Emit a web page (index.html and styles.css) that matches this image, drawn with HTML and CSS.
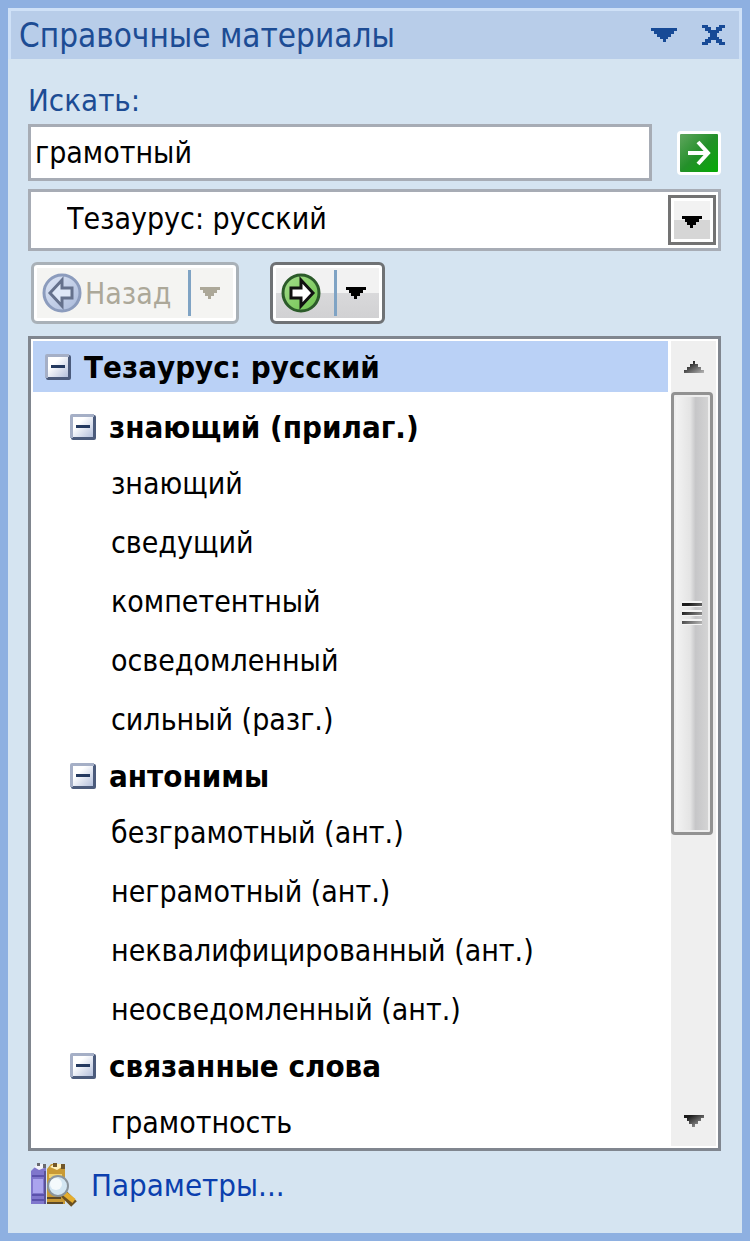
FILE: index.html
```html
<!DOCTYPE html>
<html lang="ru">
<head>
	<meta charset="utf-8">
	<title>Справочные материалы</title>
	<link rel="stylesheet" href="styles.css">
</head>
<body>
	<!-- Shared drawings for the small glyphs. -->
	<svg class="defs" width="0" height="0" aria-hidden="true">
		<defs>
			<linearGradient id="boxFill" x1="0" y1="0" x2="1" y2="1">
				<stop offset="0.3" stop-color="#ffffff"/>
				<stop offset="1" stop-color="#b4c0dc"/>
			</linearGradient>
			<linearGradient id="backFill" x1="0" y1="0" x2="1" y2="1">
				<stop offset="0" stop-color="#dfe7f6"/>
				<stop offset="1" stop-color="#a9b9da"/>
			</linearGradient>
			<linearGradient id="forwardFill" x1="0" y1="0" x2="1" y2="1">
				<stop offset="0" stop-color="#a5dc8c"/>
				<stop offset="1" stop-color="#6cc24c"/>
			</linearGradient>
			<linearGradient id="arrowFade" x1="0" y1="0" x2="1" y2="1">
				<stop offset="0.2" stop-color="#1c1c1c"/>
				<stop offset="1" stop-color="#b8b8b8"/>
			</linearGradient>
			<symbol id="down" viewBox="0 0 20 12">
				<path d="M0 0H20V3H17V6H14V9H11V12H8V9H5V6H3V3H0Z"/>
			</symbol>
			<symbol id="minus" viewBox="0 0 26 26">
				<rect x="1" y="1" width="25" height="25" rx="2" fill="#4b5b7c"/>
				<path d="M0 2Q0 0 2 0H24V3H3V24H0Z" fill="#a5afc6"/>
				<rect x="3" y="3" width="20" height="20" fill="url(#boxFill)"/>
				<rect x="6" y="11" width="14" height="3" fill="#24395f"/>
			</symbol>
		</defs>
	</svg>

	<div class="pane">
		<header class="titlebar">
			<h1>Справочные материалы</h1>
			<button class="plain" aria-label="Меню">
				<svg width="26" height="14" viewBox="0 0 26 14"><path d="M0 0H26V3H23V6H20V9H17V11H15V14H12V11H9V9H6V6H3V3H0Z" fill="#174a96"/></svg>
			</button>
			<button class="plain" aria-label="Закрыть">
				<svg width="23" height="20" viewBox="0 0 23 20"><path d="M0 0H6V2H9V5H14V2H17V0H23V3H20V6H17V8H15V12H17V14H20V17H23V20H17V18H14V15H9V18H6V20H0V17H3V14H6V12H8V8H6V6H3V3H0Z" fill="#174a96"/></svg>
			</button>
		</header>

		<main class="content">
			<label class="caption" for="query">Искать:</label>
			<div class="search">
				<input id="query" type="text" value="грамотный">
				<button class="go" aria-label="Начать поиск">
					<svg width="26" height="26" viewBox="0 0 26 26"><path d="M2 13H22M12 2L22 13L12 24" fill="none" stroke="#fff" stroke-width="4"/></svg>
				</button>
			</div>
			<div class="source">
				<select aria-label="Источник">
					<option>Тезаурус: русский</option>
				</select>
				<span class="source-arrow"><svg width="20" height="12"><use href="#down"/></svg></span>
			</div>

			<div class="nav">
				<div class="split back">
					<button disabled>
						<svg width="40" height="40" viewBox="0 0 40 40">
							<circle cx="20" cy="20" r="18" fill="url(#backFill)" stroke="#8c9cbd" stroke-width="3"/>
							<path d="M8 20L20 7V15H30V25H20V33Z" fill="#dfe8f7" stroke="#65718c" stroke-width="3"/>
						</svg>
						<span>Назад</span>
					</button>
					<button class="more" disabled aria-label="Список предыдущих"><svg width="20" height="12"><use href="#down"/></svg></button>
				</div>
				<div class="split forward">
					<button aria-label="Вперед">
						<svg width="40" height="40" viewBox="0 0 40 40">
							<circle cx="20" cy="20" r="18" fill="url(#forwardFill)" stroke="#2c5b2a" stroke-width="3"/>
							<path d="M32 20L20 7V15H10V25H20V33Z" fill="#fff" stroke="#111" stroke-width="3"/>
						</svg>
					</button>
					<button class="more" aria-label="Список следующих"><svg width="20" height="12"><use href="#down"/></svg></button>
				</div>
			</div>

			<div class="results">
				<div class="tree">
					<h2><button class="plain" aria-label="Свернуть"><svg width="26" height="26"><use href="#minus"/></svg></button>Тезаурус: русский</h2>

					<h3><button class="plain" aria-label="Свернуть"><svg width="26" height="26"><use href="#minus"/></svg></button>знающий (прилаг.)</h3>
					<ul>
						<li>знающий</li>
						<li>сведущий</li>
						<li>компетентный</li>
						<li>осведомленный</li>
						<li>сильный (разг.)</li>
					</ul>

					<h3><button class="plain" aria-label="Свернуть"><svg width="26" height="26"><use href="#minus"/></svg></button>антонимы</h3>
					<ul>
						<li>безграмотный (ант.)</li>
						<li>неграмотный (ант.)</li>
						<li>неквалифицированный (ант.)</li>
						<li>неосведомленный (ант.)</li>
					</ul>

					<h3><button class="plain" aria-label="Свернуть"><svg width="26" height="26"><use href="#minus"/></svg></button>связанные слова</h3>
					<ul>
						<li>грамотность</li>
					</ul>
				</div>
				<div class="scrollbar">
					<button class="plain step" aria-label="Вверх">
						<svg width="20" height="12" viewBox="0 0 20 12"><path d="M0 12V9H3V6H6V3H9V0H11V3H14V6H17V9H20V12Z" fill="url(#arrowFade)"/></svg>
					</button>
					<div class="track">
						<div class="thumb">
							<svg width="20" height="24" viewBox="0 0 20 24"><path d="M0 3H20M0 12H20M0 21H20" stroke="#f4f4f4" stroke-width="6"/><path d="M0 2H20V5H0ZM0 11H20V14H0ZM0 20H20V23H0Z" fill="url(#arrowFade)"/></svg>
						</div>
					</div>
					<button class="plain step" aria-label="Вниз">
						<svg width="20" height="12" fill="url(#arrowFade)"><use href="#down"/></svg>
					</button>
				</div>
			</div>

			<footer class="options">
				<svg width="46" height="44" viewBox="0 0 46 44">
					<path d="M0 8L5 3H15V41H0Z" fill="#7f76cc"/>
					<path d="M3 4L7 1H14L13 5L8 7Z" fill="#f3f3fa"/>
					<path d="M6 0H9V3H6ZM12 1H15V5H12Z" fill="#69696f"/>
					<path d="M2 16H12V30H2Z" fill="#aaa4ee"/>
					<path d="M1 13H13M1 32H13M1 37H13" stroke="#5b52ac" stroke-width="2"/>
					<path d="M14 8V41" stroke="#5b5299" stroke-width="2"/>
					<path d="M16 6L20 1H34V41H16Z" fill="#c99a35"/>
					<path d="M19 4L23 1H31V4L26 7Z" fill="#fff1bb"/>
					<path d="M22 0H26V4H22ZM30 1H34V6H30Z" fill="#71572b"/>
					<path d="M18 11H31V15H18Z" fill="#f1d36f"/>
					<path d="M16 35H30M16 40H32" stroke="#5e4a28" stroke-width="2"/>
					<path d="M33 31L43 41" stroke="#6b5020" stroke-width="8"/>
					<path d="M33 30L43 38" stroke="#e4ad2e" stroke-width="5"/>
					<circle cx="27" cy="23" r="10" fill="#d3e6f2" stroke="#8a949c" stroke-width="2"/>
					<circle cx="25" cy="21" r="6" fill="#f4fafc"/>
				</svg>
				<a href="#">Параметры...</a>
			</footer>
		</main>
	</div>
</body>
</html>
```
FILE: styles.css
```css
* {
	box-sizing: border-box;
}
body {
	margin: 0;
	font-family: "DejaVu Sans Condensed", "DejaVu Sans", sans-serif;
	font-size: 30px;
	color: #000;
	background-color: #8eb0e1;
}
button, input, select {
	font: inherit;
	color: inherit;
	margin: 0;
	border-radius: 0;
}
h1, h2, h3, ul {
	margin: 0;
	padding: 0;
}
svg {
	display: block;
	flex: none;
}
.defs {
	position: absolute;
}
.plain {
	padding: 0;
	border: 0;
	background: none;
}
.pane {
	display: flex;
	flex-direction: column;
	height: 100vh;
	border: 8px solid #8eb0e1;
	background-color: #d5e4f1;
}
.titlebar {
	display: flex;
	align-items: center;
	gap: 25px;
	height: 51px;
	flex: none;
	padding: 0 14px 0 8px;
	border: 3px solid #cfe1f7;
	border-bottom: 0;
	background-color: #b8cde9;
	color: #1d4c94;
}
.titlebar h1 {
	flex: 1;
	font-size: 33px;
	font-weight: normal;
}
.content {
	display: flex;
	flex-direction: column;
	flex: 1;
	min-height: 0;
	padding: 17px 21px 15px 20px;
}
.caption {
	font-size: 31px;
	line-height: 48px;
	color: #1d4c94;
}
.search {
	display: flex;
	align-items: center;
	justify-content: space-between;
	gap: 25px;
}
.search input {
	flex: 1;
	min-width: 0;
	height: 57px;
	padding: 0 4px;
	border: 3px solid #a7acb5;
	background-color: #fff;
}
.go {
	display: flex;
	align-items: center;
	justify-content: center;
	width: 44px;
	height: 44px;
	padding: 0;
	border: 3px solid #fff;
	border-radius: 4px;
	background: linear-gradient(135deg, #5fa55e, #24902a 50%, #04ab04);
}
.source {
	position: relative;
	margin-top: 8px;
}
.source select {
	display: block;
	width: 100%;
	height: 62px;
	padding: 0 60px 4px 36px;
	border: 3px solid #a7acb5;
	background-color: #fff;
	appearance: none;
}
/* Drawn over the right end of the select. */
.source-arrow {
	position: absolute;
	top: 6px;
	right: 5px;
	bottom: 6px;
	display: flex;
	align-items: center;
	justify-content: center;
	width: 48px;
	border: 3px solid #737373;
	box-shadow: inset 0 0 0 3px #fff;
	background: linear-gradient(#f2f2f2 50%, #d6d6d6 50%);
	pointer-events: none;
}
.source-arrow svg {
	margin-top: 4px;
}
.nav {
	display: flex;
	gap: 31px;
	margin: 11px 0 12px 3px;
}
.split {
	display: flex;
	align-items: center;
	height: 62px;
	border: 3px solid #6f7275;
	border-radius: 6px;
	box-shadow: inset 0 0 0 3px #fff;
	background: linear-gradient(#f2f2f2 50%, #d9d9db 50%, #d0d0d2);
}
.split button {
	display: flex;
	align-items: center;
	gap: 3px;
	height: 46px;
	padding: 0 13px 0 8px;
	border: 0;
	background: none;
}
.split .more {
	padding: 0 16px 0 9px;
	border-left: 3px solid #7fa3c4;
}
.back {
	border-color: #a9b1b8;
	background: #f4f4f2;
	color: #aca899;
}
.back button:first-child {
	padding-right: 17px;
}
.split svg, .source-arrow svg {
	fill: currentColor;
}
.results {
	display: flex;
	flex: 1;
	min-height: 0;
	padding: 2px;
	border: 3px solid #80868f;
	background-color: #fff;
}
.tree {
	flex: 1;
	min-width: 0;
	overflow-y: auto;
	scrollbar-width: none;
}
.tree h2, .tree h3 {
	display: flex;
	align-items: center;
	gap: 13px;
	height: 54px;
	padding-left: 37px;
	font-size: 31px;
}
.tree h2 {
	height: 51px;
	margin-bottom: 8px;
	padding-left: 12px;
	background-color: #bad1f6;
}
.tree ul {
	list-style: none;
}
.tree li {
	padding-left: 78px;
	line-height: 59px;
	white-space: nowrap;
}
.scrollbar {
	display: flex;
	flex-direction: column;
	width: 45px;
	margin: 0 0 0 3px;
	background-color: #efefef;
}
.step {
	display: flex;
	align-items: center;
	justify-content: center;
	height: 51px;
}
.track {
	flex: 1;
}
.thumb {
	display: flex;
	align-items: center;
	justify-content: center;
	width: 42px;
	height: 63%;
	border: 3px solid #929292;
	border-radius: 4px;
	box-shadow: inset 0 0 0 2px #eee;
	background: linear-gradient(90deg, #f5f5f5, #e4e4e4 45%, #c6c6c8 60%, #d6d6d6);
}
.options {
	display: flex;
	align-items: center;
	gap: 14px;
	height: 67px;
	flex: none;
	padding-left: 3px;
}
.options a {
	font-size: 31px;
	color: #0b3fae;
	text-decoration: none;
}
```
